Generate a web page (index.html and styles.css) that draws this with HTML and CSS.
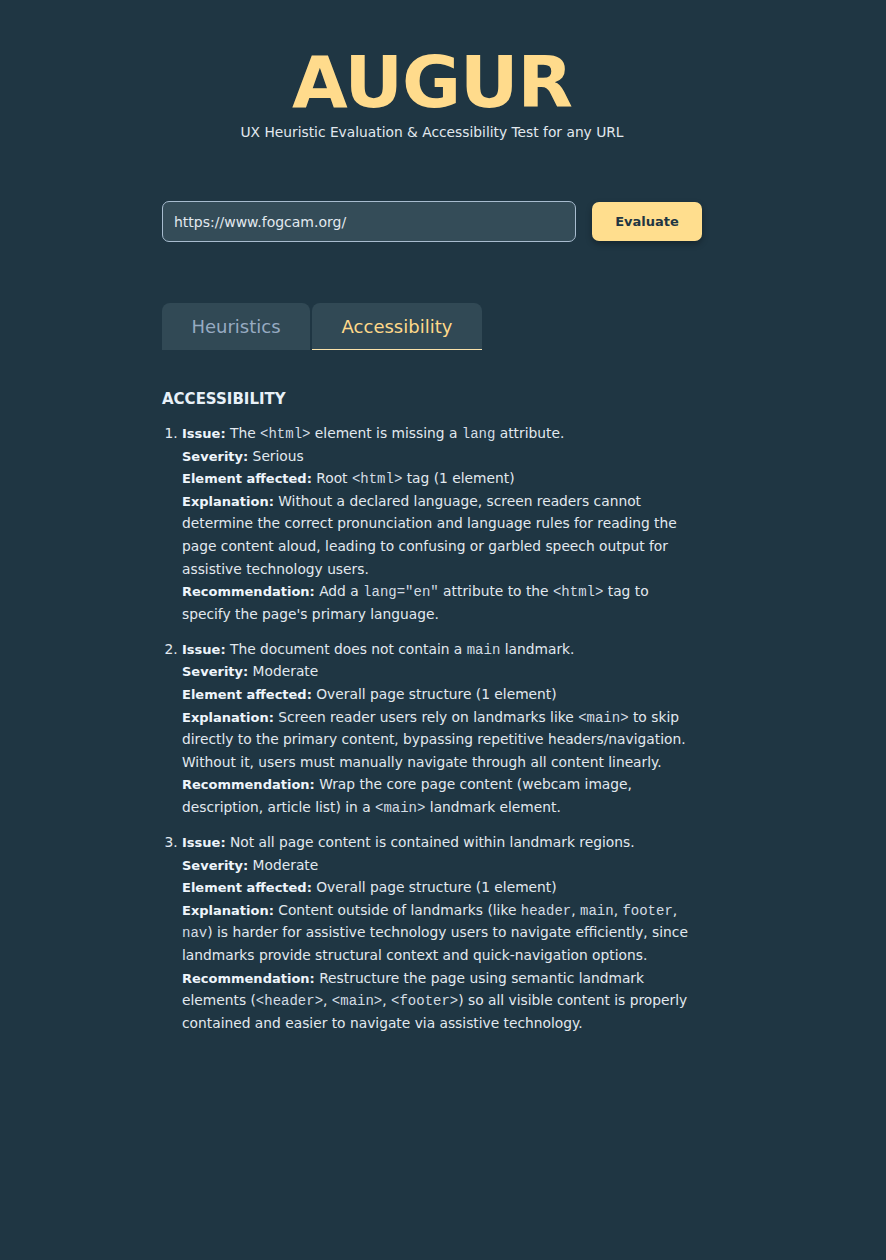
FILE: index.html
```html
<!DOCTYPE html>
<html>
<head>
    <title>Augur</title>
    <link rel="stylesheet" href="styles.css">
</head>
<body>

<div class="page">
    <header class="hero">
        <h1>AUGUR</h1>
        <p class="tagline">UX Heuristic Evaluation &amp; Accessibility Test for any URL</p>
    </header>

    <form class="url-form" onsubmit="return false;">
        <input type="text" class="url-input" value="https://www.fogcam.org/">
        <button type="submit" class="eval-btn">Evaluate</button>
    </form>

    <div class="tabs">
        <button class="tab">Heuristics</button>
        <button class="tab active">Accessibility</button>
    </div>

    <section class="report">
        <h2>ACCESSIBILITY</h2>
        <ol class="issues">
            <li>
                <div><b>Issue:</b> The <code>&lt;html&gt;</code> element is missing a <code>lang</code> attribute.</div>
                <div><b>Severity:</b> Serious</div>
                <div><b>Element affected:</b> Root <code>&lt;html&gt;</code> tag (1 element)</div>
                <div><b>Explanation:</b> Without a declared language, screen readers cannot determine the correct pronunciation and language rules for reading the page content aloud, leading to confusing or garbled speech output for assistive technology users.</div>
                <div><b>Recommendation:</b> Add a <code>lang="en"</code> attribute to the <code>&lt;html&gt;</code> tag to specify the page's primary language.</div>
            </li>
            <li>
                <div><b>Issue:</b> The document does not contain a <code>main</code> landmark.</div>
                <div><b>Severity:</b> Moderate</div>
                <div><b>Element affected:</b> Overall page structure (1 element)</div>
                <div><b>Explanation:</b> Screen reader users rely on landmarks like <code>&lt;main&gt;</code> to skip directly to the primary content, bypassing repetitive headers/navigation. Without it, users must manually navigate through all content linearly.</div>
                <div><b>Recommendation:</b> Wrap the core page content (webcam image, description, article list) in a <code>&lt;main&gt;</code> landmark element.</div>
            </li>
            <li>
                <div><b>Issue:</b> Not all page content is contained within landmark regions.</div>
                <div><b>Severity:</b> Moderate</div>
                <div><b>Element affected:</b> Overall page structure (1 element)</div>
                <div><b>Explanation:</b> Content outside of landmarks (like <code>header</code>, <code>main</code>, <code>footer</code>, <code>nav</code>) is harder for assistive technology users to navigate efficiently, since landmarks provide structural context and quick-navigation options.</div>
                <div><b>Recommendation:</b> Restructure the page using semantic landmark elements (<code>&lt;header&gt;</code>, <code>&lt;main&gt;</code>, <code>&lt;footer&gt;</code>) so all visible content is properly contained and easier to navigate via assistive technology.</div>
            </li>
        </ol>
    </section>
</div>

</body>
</html>
```

FILE: styles.css
```css
* {
    box-sizing: border-box;
    margin: 0;
    padding: 0;
}
body {
    font-family: 'DejaVu Sans', 'Open Sans', sans-serif;
    background-color: #1f3643;
    color: #e2e9ef;
    padding-right: 22px;
    min-height: 100vh;
}
.page {
    max-width: 540px;
    margin: 0 auto;
    padding-top: 44px;
}
.hero {
    text-align: center;
}
.hero h1 {
    font-size: 72px;
    font-weight: 800;
    color: #ffdb8c;
    line-height: 76px;
    letter-spacing: -1px;
}
.tagline {
    font-size: 13.8px;
    color: #e2e9ef;
    margin-top: 4px;
}
.url-form {
    display: flex;
    gap: 16px;
    margin-top: 61px;
    align-items: center;
}
.url-input {
    flex: 1;
    height: 41px;
    padding: 0 11px;
    background-color: #344c58;
    border: 1px solid #a8bccf;
    border-radius: 7px;
    color: #e2e9ef;
    font-family: inherit;
    font-size: 14px;
    outline: none;
}
.eval-btn {
    width: 110px;
    height: 39px;
    background-color: #ffde8e;
    color: #1f3643;
    border: none;
    border-radius: 7px;
    font-family: inherit;
    font-size: 13px;
    font-weight: 700;
    box-shadow: 0 3px 6px rgba(0, 0, 0, 0.3);
    cursor: pointer;
}
.tabs {
    display: flex;
    gap: 2px;
    margin-top: 61px;
}
.tab {
    height: 47px;
    background-color: #314955;
    border: none;
    border-radius: 8px 8px 0 0;
    font-family: inherit;
    font-size: 18px;
    color: #97abc2;
    cursor: pointer;
}
.tab:first-child {
    width: 148px;
}
.tab.active {
    width: 170px;
    color: #ffd98a;
    border-bottom: 1px solid #fbe3ab;
}
.report {
    margin-top: 40px;
}
.report h2 {
    font-size: 15px;
    font-weight: 700;
    color: #e8f1f8;
    margin-bottom: 14px;
}
.issues {
    padding-left: 20px;
    padding-right: 10px;
    font-size: 13.8px;
    line-height: 22.6px;
}
.issues li {
    margin-bottom: 12.5px;
}
.issues b {
    font-size: 13px;
    line-height: 1;
    color: #eef5fb;
}
code {
    font-family: 'Liberation Mono', monospace;
    font-size: 14px;
    line-height: 1;
    color: #d3dce4;
}
```
